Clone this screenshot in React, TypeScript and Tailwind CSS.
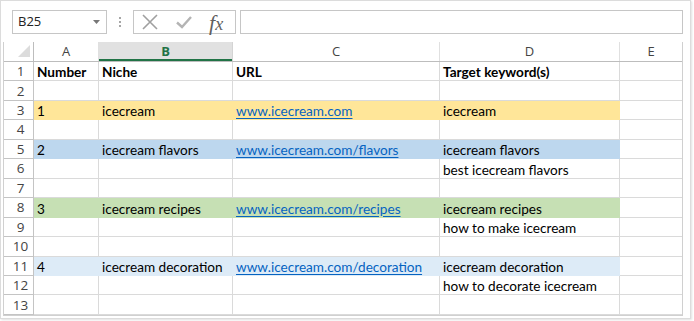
const cols = ['A', 'B', 'C', 'D', 'E'];
const widths = ['w-[65px]', 'w-[134px]', 'w-[207px]', 'w-[180px]', 'w-[62px]'];

type Row = { cells: (string | null)[]; fill?: string; bold?: boolean };

const rows: Row[] = [
  { cells: ['Number', 'Niche', 'URL', 'Target keyword(s)'], bold: true },
  { cells: [] },
  { cells: ['1', 'icecream', 'www.icecream.com', 'icecream'], fill: 'bg-[#ffe699] border-[#ffe699]' },
  { cells: [] },
  { cells: ['2', 'icecream flavors', 'www.icecream.com/flavors', 'icecream flavors'], fill: 'bg-[#bdd7ee] border-[#bdd7ee]' },
  { cells: [null, null, null, 'best icecream flavors'] },
  { cells: [] },
  { cells: ['3', 'icecream recipes', 'www.icecream.com/recipes', 'icecream recipes'], fill: 'bg-[#c6e0b4] border-[#c6e0b4]' },
  { cells: [null, null, null, 'how to make icecream'] },
  { cells: [] },
  { cells: ['4', 'icecream decoration', 'www.icecream.com/decoration', 'icecream decoration'], fill: 'bg-[#ddebf7] border-[#ddebf7]' },
  { cells: [null, null, null, 'how to decorate icecream'] },
  { cells: [] },
];

function Toolbar() {
  return (
    <div className="flex h-[41px] items-start pl-[11px] pt-[9px]">
      {/* name box */}
      <div className="flex h-[24px] w-[95px] items-center justify-between border border-[#c6c6c6] bg-white pl-[5px] pr-[6px]">
        <span className="text-[13px] text-[#222]" style={{ fontFamily: '"Open Sans", sans-serif' }}>B25</span>
        <svg width="7" height="4" viewBox="0 0 7 4">
          <path d="M0 0 L7 0 L3.5 4 Z" fill="#777" />
        </svg>
      </div>
      {/* grip dots */}
      <div className="ml-[12px] flex h-[24px] flex-col items-center justify-center gap-[2px]">
        <div className="h-[2px] w-[2px] bg-[#a6a6a6]" />
        <div className="h-[2px] w-[2px] bg-[#a6a6a6]" />
        <div className="h-[2px] w-[2px] bg-[#a6a6a6]" />
      </div>
      {/* buttons */}
      <div className="ml-[12px] flex h-[24px] w-[103px] items-center border border-[#c6c6c6] bg-white">
        <svg width="16" height="16" viewBox="0 0 16 16" className="ml-[8px]">
          <path d="M1 1 L15 15 M15 1 L1 15" stroke="#a0a0a0" strokeWidth="1.6" />
        </svg>
        <svg width="16" height="14" viewBox="0 0 16 14" className="ml-[18px]">
          <path d="M1 7.5 L6 12 L15 2" stroke="#b4b4b4" strokeWidth="2.4" fill="none" />
        </svg>
        <span
          className="ml-[17px] mt-[2px] text-[22px] italic leading-none text-[#5f5f5f]"
          style={{ fontFamily: '"Liberation Serif", serif' }}
        >
          f<span className="text-[18px]">x</span>
        </span>
      </div>
      {/* formula input */}
      <div className="ml-[4px] h-[24px] w-[443px] border border-[#c6c6c6] bg-white" />
    </div>
  );
}

function Grid() {
  const cellFont = { fontFamily: 'Lato, "Noto Sans", sans-serif' };
  const headFont = { fontFamily: '"Open Sans", sans-serif' };
  return (
    <div className="ml-[2px] w-[680px] border-b border-l border-r border-[#d0d0d0]">
      {/* header row */}
      <div className="flex h-[20px] border-b border-[#bdbdbd]" style={headFont}>
        <div className="relative w-[30px] border-r border-[#bdbdbd]">
          <svg width="12" height="12" viewBox="0 0 12 12" className="absolute bottom-[4px] right-[3px]">
            <path d="M12 0 L12 12 L0 12 Z" fill="#dcdcdc" />
          </svg>
        </div>
        {cols.map((c, i) =>
          c === 'B' ? (
            <div
              key={c}
              className={`${widths[i]} flex items-center justify-center border-r border-[#d4d4d4] bg-[#e1e1e1] text-[13px] font-bold text-[#217346] shadow-[inset_0_-2px_0_#217346]`}
            >
              {c}
            </div>
          ) : (
            <div
              key={c}
              className={`${widths[i]} flex items-center justify-center border-r border-[#e0e0e0] text-[13px] text-[#444] ${i === 4 ? 'border-r-0' : ''}`}
            >
              {c}
            </div>
          )
        )}
      </div>
      {rows.map((r, ri) => (
        <div key={ri} className="flex h-[19.46px]">
          <div
            className="flex w-[30px] items-center justify-center border-b border-r border-[#c4c4c4] pl-[4px] text-[13.5px] text-[#444]"
            style={headFont}
          >
            {ri + 1}
          </div>
          {cols.map((c, ci) => {
            const text = r.cells[ci];
            const filled = r.fill && ci < 4;
            const isLink = ci === 2 && text && !r.bold;
            return (
              <div
                key={c}
                className={`${widths[ci]} flex items-end whitespace-nowrap border-b border-r pl-[3px] text-[13.6px] leading-[16px] ${
                  filled ? r.fill : 'border-[#dadada]'
                } ${ci === 4 ? 'border-r-0' : ''} ${r.bold ? 'font-bold' : ''} text-black`}
                style={cellFont}
              >
                {text &&
                  (isLink ? (
                    <span className="text-[#0563c1] underline underline-offset-2">{text}</span>
                  ) : (
                    <span>{text}</span>
                  ))}
              </div>
            );
          })}
        </div>
      ))}
    </div>
  );
}

export default function App() {
  return (
    <div className="h-[321px] w-[694px] bg-white">
      <div className="h-[319px] w-[691px] border border-[#dcdcdc] bg-white shadow-[1px_1px_2px_rgba(0,0,0,0.12)]">
        <Toolbar />
        <Grid />
      </div>
    </div>
  );
}
